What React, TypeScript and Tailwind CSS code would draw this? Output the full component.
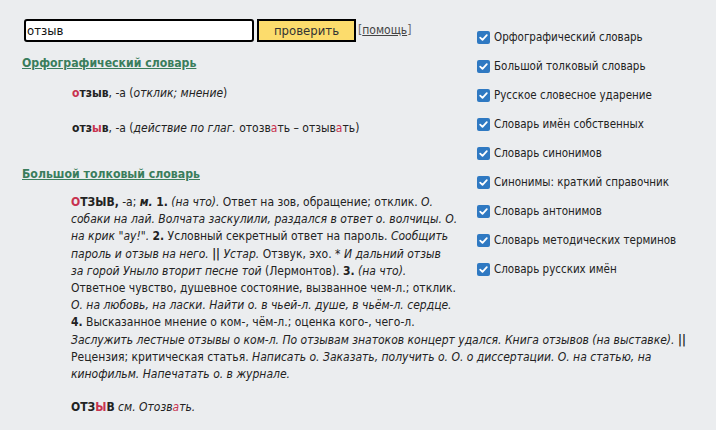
import React from "react";

const R = ({ children }: { children: React.ReactNode }) => (
  <span className="text-[#c8324f]">{children}</span>
);

const Check = ({ label }: { label: string }) => (
  <div className="flex items-center h-[17px]">
    <span className="w-[13px] h-[13px] rounded-[2px] bg-[#2f79c2] flex items-center justify-center shrink-0">
      <svg width="11" height="11" viewBox="0 0 11 11">
        <path d="M2.2 5.6 L4.5 7.9 L8.8 3.2" fill="none" stroke="#fff" strokeWidth="1.8" strokeLinecap="round" strokeLinejoin="round" />
      </svg>
    </span>
    <span className="ml-[4px] text-[#222] whitespace-nowrap">{label}</span>
  </div>
);

const labels = [
  "Орфографический словарь",
  "Большой толковый словарь",
  "Русское словесное ударение",
  "Словарь имён собственных",
  "Словарь синонимов",
  "Синонимы: краткий справочник",
  "Словарь антонимов",
  "Словарь методических терминов",
  "Словарь русских имён",
];

export default function App() {
  return (
    <div
      className="w-full h-[430px] bg-[#ebedef] flex text-[12px] text-[#222] overflow-hidden"
      style={{ fontFamily: '"DejaVu Sans Condensed", "DejaVu Sans", sans-serif' }}
    >
      <div className="w-[455px] shrink-0 pl-[22px] pt-[19px] leading-[17px]">
        <div className="flex items-center h-[23px]">
          <div className="ml-[2px] w-[230px] h-[23px] border-2 border-black rounded-[3px] bg-white flex items-center pl-[1px] text-[13px] text-[#111]">
            отзыв
          </div>
          <div className="ml-[3px] w-[99px] h-[23px] border-2 border-black bg-[#fcdc6c] flex items-center justify-center text-[13px] text-[#333]">
            проверить
          </div>
          <div className="ml-[2px] text-[12px] text-[#666]">
            [<span className="underline text-[#444]">помощь</span>]
          </div>
        </div>

        <div className="mt-[13px] font-bold text-[12.2px] text-[#3a7d5c] underline">
          Орфографический словарь
        </div>

        <div className="mt-[13px] pl-[50px] whitespace-nowrap">
          <b>
            <R>о</R>тзыв
          </b>
          , -а (<i>отклик; мнение</i>)
        </div>
        <div className="mt-[18px] pl-[50px] whitespace-nowrap">
          <b>
            отз<R>ы</R>в
          </b>
          , -а (<i>действие по глаг.</i> отозв<R>а</R>ть – отзыв<R>а</R>ть)
        </div>

        <div className="mt-[29px] font-bold text-[12.2px] text-[#3a7d5c] underline">
          Большой толковый словарь
        </div>

        <div className="mt-[11px] pl-[49px] leading-[17.2px] whitespace-nowrap">
          <div>
            <b>
              <R>О</R>ТЗЫВ,
            </b>{" "}
            -а; <b><i>м.</i></b> <b>1.</b> <i>(на что).</i> Ответ на зов, обращение; отклик. <i>О.</i>
          </div>
          <div>
            <i>собаки на лай. Волчата заскулили, раздался в ответ о. волчицы. О.</i>
          </div>
          <div>
            <i>на крик "ау!".</i> <b>2.</b> Условный секретный ответ на пароль. <i>Сообщить</i>
          </div>
          <div>
            <i>пароль и отзыв на него.</i> <b><i>||</i></b> <i>Устар.</i> Отзвук, эхо. <i>* И дальний отзыв</i>
          </div>
          <div>
            <i>за горой Уныло вторит песне той</i> (Лермонтов). <b>3.</b> <i>(на что).</i>
          </div>
          <div>Ответное чувство, душевное состояние, вызванное чем-л.; отклик.</div>
          <div>
            <i>О. на любовь, на ласки. Найти о. в чьей-л. душе, в чьём-л. сердце.</i>
          </div>
          <div>
            <b>4.</b> Высказанное мнение о ком-, чём-л.; оценка кого-, чего-л.
          </div>
          <div>
            <i>Заслужить лестные отзывы о ком-л. По отзывам знатоков концерт удался. Книга отзывов (на выставке).</i>{" "}
            <b><i>||</i></b>
          </div>
          <div>
            Рецензия; критическая статья.{" "}
            <i>Написать о. Заказать, получить о. О. о диссертации. О. на статью, на</i>
          </div>
          <div>
            <i>кинофильм. Напечатать о. в журнале.</i>
          </div>
        </div>

        <div className="mt-[16px] pl-[49px] whitespace-nowrap">
          <b>
            ОТЗ<R>Ы</R>В
          </b>{" "}
          <i>
            см. Отозв<R>а</R>ть.
          </i>
        </div>
      </div>

      <div className="ml-[22px] pt-[29px] flex flex-col gap-[12px] text-[11.5px]">
        {labels.map((l) => (
          <Check key={l} label={l} />
        ))}
      </div>
    </div>
  );
}
